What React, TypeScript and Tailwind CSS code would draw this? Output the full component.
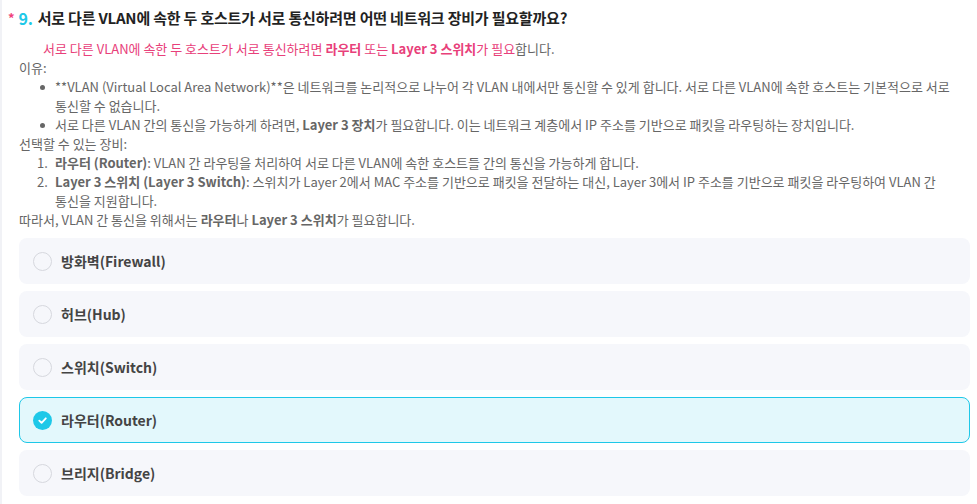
import React from "react";

const options = [
  { label: "방화벽(Firewall)", selected: false },
  { label: "허브(Hub)", selected: false },
  { label: "스위치(Switch)", selected: false },
  { label: "라우터(Router)", selected: true },
  { label: "브리지(Bridge)", selected: false },
];

function Option({ label, selected }: { label: string; selected: boolean }) {
  return (
    <div
      className={
        selected
          ? "flex items-center h-[46px] rounded-[8px] border border-[#1ec8e8] bg-[#e3f8fc] pl-[13px]"
          : "flex items-center h-[46px] rounded-[8px] border border-transparent bg-[#f6f7fb] pl-[13px]"
      }
    >
      {selected ? (
        <span className="flex items-center justify-center w-[19px] h-[19px] rounded-full bg-[#1ec8e8]">
          <svg width="11" height="11" viewBox="0 0 12 12" fill="none">
            <path d="M2.5 6.2 L5 8.6 L9.6 3.6" stroke="white" strokeWidth="2" strokeLinecap="round" strokeLinejoin="round" />
          </svg>
        </span>
      ) : (
        <span className="w-[19px] h-[19px] rounded-full border border-[#d6d8de] bg-[#f6f7fb]" />
      )}
      <span className="ml-[9px] text-[14px] font-semibold text-[#444]">{label}</span>
    </div>
  );
}

function Bullet({ children }: { children: React.ReactNode }) {
  return (
    <div className="flex">
      <span className="w-[36px] shrink-0 flex justify-end pr-[10px] pt-[8px]">
        <span className="w-[5px] h-[5px] rounded-full bg-[#666]" />
      </span>
      <div>{children}</div>
    </div>
  );
}

function Num({ n, children }: { n: string; children: React.ReactNode }) {
  return (
    <div className="flex">
      <span className="w-[36px] shrink-0 pl-[18px]">{n}</span>
      <div>{children}</div>
    </div>
  );
}

export default function App() {
  return (
    <div
      className="min-h-[504px] w-[977px] bg-white border-l-2 border-[#f1f2f6] pr-[7px] text-[#555]"
      style={{ fontFamily: '"Noto Sans CJK KR", "Noto Sans", sans-serif' }}
    >
      <div className="flex items-center pt-[6px] pl-[6px] h-[30px] text-[15px] font-bold tracking-[-0.2px]">
        <span className="text-[#f0427a] text-[13px] mr-[4px]">*</span>
        <span className="text-[#1ec8e8] text-[16px] mr-[5px]">9.</span>
        <span className="text-[#222]">서로 다른 VLAN에 속한 두 호스트가 서로 통신하려면 어떤 네트워크 장비가 필요할까요?</span>
      </div>

      <div className="pl-[17px] pt-[9px] pr-[18px] text-[13px] leading-[19px] text-[#666] break-keep">
        <p className="pl-[24px] text-[#e8407a]">
          서로 다른 VLAN에 속한 두 호스트가 서로 통신하려면 <b className="font-semibold">라우터</b> 또는{" "}
          <b className="font-semibold">Layer 3 스위치</b>가 필요
          <span className="text-[#666]">합니다.</span>
        </p>
        <p>이유:</p>
        <Bullet>
          **VLAN (Virtual Local Area Network)**은 네트워크를 논리적으로 나누어 각 VLAN 내에서만 통신할 수 있게 합니다. 서로 다른
          VLAN에 속한 호스트는 기본적으로 서로 통신할 수 없습니다.
        </Bullet>
        <Bullet>
          서로 다른 VLAN 간의 통신을 가능하게 하려면, <b className="font-semibold">Layer 3 장치</b>가 필요합니다. 이는 네트워크 계층에서
          IP 주소를 기반으로 패킷을 라우팅하는 장치입니다.
        </Bullet>
        <p>선택할 수 있는 장비:</p>
        <Num n="1.">
          <b className="font-semibold">라우터 (Router)</b>: VLAN 간 라우팅을 처리하여 서로 다른 VLAN에 속한 호스트들 간의 통신을 가능하게
          합니다.
        </Num>
        <Num n="2.">
          <b className="font-semibold">Layer 3 스위치 (Layer 3 Switch)</b>: 스위치가 Layer 2에서 MAC 주소를 기반으로 패킷을 전달하는 대신,
          Layer 3에서 IP 주소를 기반으로 패킷을 라우팅하여 VLAN 간 통신을 지원합니다.
        </Num>
        <p>
          따라서, VLAN 간 통신을 위해서는 <b className="font-semibold">라우터</b>나 <b className="font-semibold">Layer 3 스위치</b>가
          필요합니다.
        </p>
      </div>

      <div className="flex flex-col gap-[7px] pl-[17px] pt-[9px] pb-[6px]">
        {options.map((o) => (
          <Option key={o.label} label={o.label} selected={o.selected} />
        ))}
      </div>
    </div>
  );
}
